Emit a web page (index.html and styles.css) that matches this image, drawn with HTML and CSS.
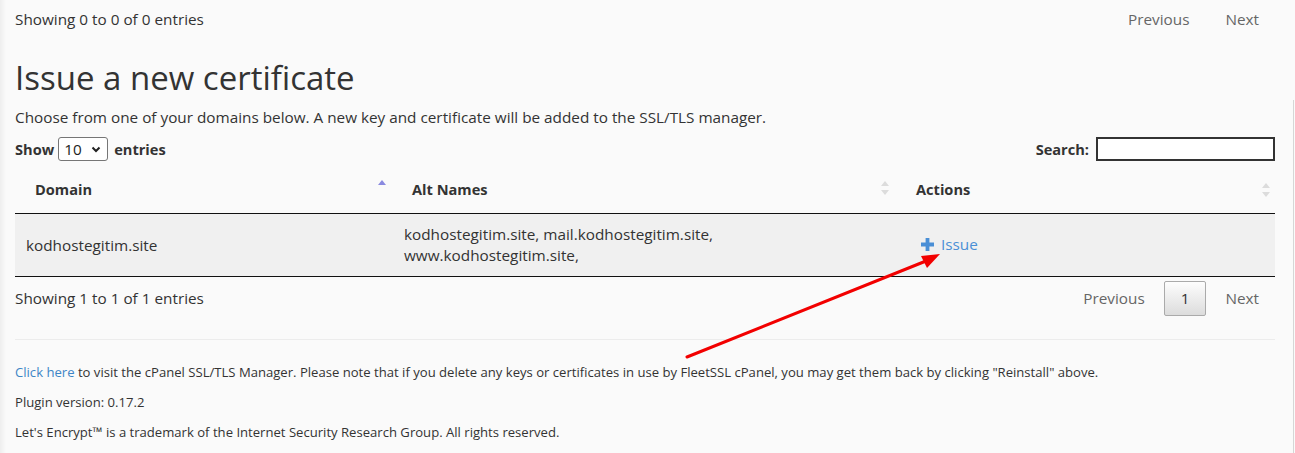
FILE: index.html
```html
<!DOCTYPE html>
<html>
<head>
<meta charset="utf-8">
<link rel="stylesheet" href="styles.css">
</head>
<body>
<div class="page">
  <div class="info-row top-info">
    <div class="info">Showing 0 to 0 of 0 entries</div>
    <div class="paginate">
      <span class="pg">Previous</span>
      <span class="pg">Next</span>
    </div>
  </div>

  <h1 class="title">Issue a new certificate</h1>
  <p class="lead">Choose from one of your domains below. A new key and certificate will be added to the SSL/TLS manager.</p>

  <div class="controls">
    <label class="length">Show <span class="select">10<svg class="caret" width="10" height="7" viewBox="0 0 10 7"><path d="M1.5 1.5 L5 5 L8.5 1.5" fill="none" stroke="#222" stroke-width="2"/></svg></span> entries</label>
    <label class="search">Search: <span class="search-box"></span></label>
  </div>

  <table class="grid">
    <thead>
      <tr>
        <th class="c1">Domain<svg class="sort" width="10" height="16" viewBox="0 0 10 16"><path d="M1 6 L5 1 L9 6 Z" fill="#8a8ae0"/></svg></th>
        <th class="c2">Alt Names<svg class="sort" width="10" height="16" viewBox="0 0 10 16"><path d="M1 6 L5 1 L9 6 Z M1 10 L5 15 L9 10 Z" fill="#dcdcdc"/></svg></th>
        <th class="c3">Actions<svg class="sort" width="10" height="16" viewBox="0 0 10 16"><path d="M1 6 L5 1 L9 6 Z M1 10 L5 15 L9 10 Z" fill="#dcdcdc"/></svg></th>
      </tr>
    </thead>
    <tbody>
      <tr>
        <td class="d1">kodhostegitim.site</td>
        <td class="d2">kodhostegitim.site, mail.kodhostegitim.site,<br>www.kodhostegitim.site,</td>
        <td class="d3"><a class="issue"><svg class="plus" width="13" height="13" viewBox="0 0 13 13"><path d="M4.6 0 H8.4 V4.6 H13 V8.4 H8.4 V13 H4.6 V8.4 H0 V4.6 H4.6 Z" fill="#4a8fd6"/></svg>Issue</a></td>
      </tr>
    </tbody>
  </table>

  <div class="info-row bottom-info">
    <div class="info">Showing 1 to 1 of 1 entries</div>
    <div class="paginate">
      <span class="pg">Previous</span>
      <span class="pg current">1</span>
      <span class="pg">Next</span>
    </div>
  </div>

  <hr class="sep">

  <div class="footer">
    <p><a class="link">Click here</a> to visit the cPanel SSL/TLS Manager. Please note that if you delete any keys or certificates in use by FleetSSL cPanel, you may get them back by clicking "Reinstall" above.</p>
    <p>Plugin version: 0.17.2</p>
    <p>Let's Encrypt™ is a trademark of the Internet Security Research Group. All rights reserved.</p>
  </div>
</div>

<svg class="arrow" width="1295" height="453" viewBox="0 0 1295 453">
  <line x1="687" y1="357" x2="926" y2="261" stroke="#f20000" stroke-width="3" stroke-linecap="round"/>
  <path d="M940 254 L921 256 L927 268 Z" fill="#f20000"/>
</svg>
<div class="scrollline"></div>
</body>
</html>
```

FILE: styles.css
```css
html, body {
  margin: 0;
  padding: 0;
}
body {
  background: linear-gradient(to right, #eeeeee 0, #f6f6f6 4px, #fafafa 6px, #fafafa 100%);
  font-family: "Open Sans", "Liberation Sans", sans-serif;
  color: #333;
  font-size: 15.3px;
  width: 1295px;
  height: 453px;
  overflow: hidden;
  position: relative;
}
.page {
  padding: 0 20px 0 15px;
}
.info-row {
  display: flex;
  justify-content: space-between;
  align-items: center;
}
.top-info {
  height: 38px;
}
.info {
  line-height: 20px;
}
.paginate {
  display: flex;
  align-items: center;
}
.pg {
  color: #666;
  padding: 8px 16px 8px 19px;
  line-height: 19px;
}
.top-info .pg:first-child {
  padding-right: 17px;
}
.pg:last-child {
  padding-right: 16px;
}
.pg.current {
  color: #333;
  border: 1px solid #aaa;
  border-radius: 2px;
  background: linear-gradient(to bottom, #fdfdfd 0%, #dcdcdc 100%);
  padding: 7px 16px;
  margin-left: 3px;
  line-height: 19px;
}
.pg.current + .pg {
  padding-left: 19px;
}
.title {
  font-size: 33px;
  font-weight: 400;
  line-height: 40px;
  margin: 20px 0 0 0;
  color: #333;
}
.lead {
  margin: 9px 0 0 0;
  line-height: 20px;
}
.controls {
  display: flex;
  justify-content: space-between;
  align-items: center;
  margin-top: 9px;
  height: 26px;
}
.length, .search {
  font-weight: 700;
  font-size: 14.6px;
  display: flex;
  align-items: center;
}
.select {
  display: inline-flex;
  align-items: center;
  justify-content: space-between;
  box-sizing: border-box;
  width: 50px;
  height: 24px;
  border: 1px solid #767676;
  border-radius: 3px;
  background: #fff;
  font-weight: 400;
  font-size: 15.3px;
  padding: 0 6px 0 5px;
  margin: 0 6px 0 4px;
  color: #222;
}
.search-box {
  display: inline-block;
  box-sizing: border-box;
  width: 179px;
  height: 24px;
  border: 2px solid #333;
  background: #fff;
  margin-left: 7px;
}
.grid {
  width: 1260px;
  border-collapse: collapse;
  margin-top: 4px;
}
.grid th {
  text-align: left;
  font-weight: 700;
  font-size: 14.6px;
  padding: 13px 18px 14px 20px;
  line-height: 20px;
  border-bottom: 1px solid #111;
  position: relative;
}
.grid th.c2 { padding-left: 19px; }
.c1 { width: 340px; }
.c2 { width: 466px; }
.sort {
  position: absolute;
  right: 6px;
  top: 14px;
}
.c1 .sort { top: 13px; }
.c3 .sort { right: 4px; top: 16px; }
.grid td {
  background: #f0f0f0;
  padding: 10px 10px 10px 11px;
  line-height: 21px;
  border-bottom: 1px solid #111;
  vertical-align: middle;
}
.grid td.d3 { padding-left: 25px; }
.issue {
  color: #4a8fd6;
  display: inline-flex;
  align-items: center;
}
.plus {
  margin-right: 7px;
  margin-top: 1px;
}
.bottom-info {
  height: 42px;
}
.sep {
  border: 0;
  border-top: 1px solid #ececec;
  margin: 20px 0 0 0;
}
.footer {
  font-size: 13.1px;
  padding-top: 24px;
}
.footer p {
  margin: 0 0 13px 0;
  line-height: 17px;
}
.link {
  color: #3d85c6;
}
.arrow {
  position: absolute;
  left: 0;
  top: 0;
  pointer-events: none;
}
.scrollline {
  position: absolute;
  right: 1px;
  top: 100px;
  bottom: 0;
  width: 1px;
  background: #d6d6d6;
}
```
